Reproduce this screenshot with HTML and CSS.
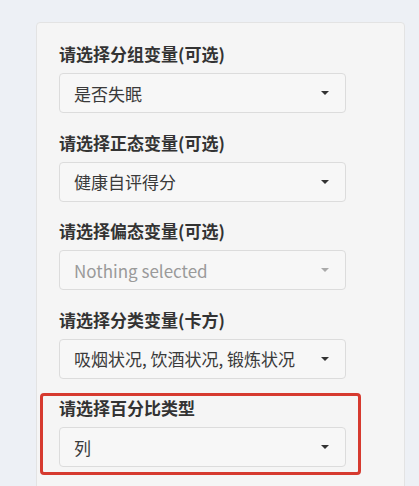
FILE: index.html
```html
<!DOCTYPE html>
<html lang="zh-CN">
<head>
<meta charset="utf-8">
<link rel="stylesheet" href="styles.css">
</head>
<body>
<div class="page">
  <div class="well">
    <div class="form-group">
      <label class="control-label">请选择分组变量(可选)</label>
      <div class="select"><span class="value">是否失眠</span><span class="caret"></span></div>
    </div>
    <div class="form-group">
      <label class="control-label">请选择正态变量(可选)</label>
      <div class="select"><span class="value">健康自评得分</span><span class="caret"></span></div>
    </div>
    <div class="form-group">
      <label class="control-label">请选择偏态变量(可选)</label>
      <div class="select"><span class="value placeholder">Nothing selected</span><span class="caret muted"></span></div>
    </div>
    <div class="form-group">
      <label class="control-label">请选择分类变量(卡方)</label>
      <div class="select"><span class="value">吸烟状况, 饮酒状况, 锻炼状况</span><span class="caret"></span></div>
    </div>
    <div class="form-group highlighted">
      <label class="control-label">请选择百分比类型</label>
      <div class="select"><span class="value">列</span><span class="caret"></span></div>
      <div class="annotation"></div>
    </div>
  </div>
</div>
</body>
</html>
```
FILE: styles.css
```css
html, body {
  margin: 0;
  padding: 0;
  background: #edf0f5;
  height: 100%;
  overflow: hidden;
}
.page {
  padding: 22px 14px 0 36px;
  font-family: "Noto Sans CJK SC", "Noto Sans", sans-serif;
  color: #333;
}
.well {
  background: #f5f5f5;
  border: 1px solid #e3e3e3;
  border-radius: 4px;
  padding: 19px 22px 40px 22px;
  min-height: 600px;
}
.form-group {
  margin-bottom: 17.5px;
  position: relative;
}
.control-label {
  display: block;
  font-size: 17px;
  line-height: 24px;
  font-weight: 700;
  margin-bottom: 7px;
  color: #333;
}
.select {
  width: 287px;
  height: 40px;
  box-sizing: border-box;
  border: 1px solid #dcdcdc;
  border-radius: 4px;
  background: #f7f7f7;
  display: flex;
  align-items: center;
  justify-content: space-between;
  padding: 0 16px 0 14px;
}
.value {
  font-size: 17px;
  color: #3a3a3a;
  white-space: nowrap;
}
.value.placeholder {
  color: #9a9a9a;
}
.caret {
  width: 0;
  height: 0;
  border-left: 4px solid transparent;
  border-right: 4px solid transparent;
  border-top: 4px solid #333;
}
.caret.muted {
  border-top-color: #aaa;
}
.annotation {
  position: absolute;
  left: -19px;
  top: -3px;
  width: 321px;
  height: 82px;
  box-sizing: border-box;
  border: 3px solid #d63a2f;
  border-radius: 4px;
  pointer-events: none;
}
```
